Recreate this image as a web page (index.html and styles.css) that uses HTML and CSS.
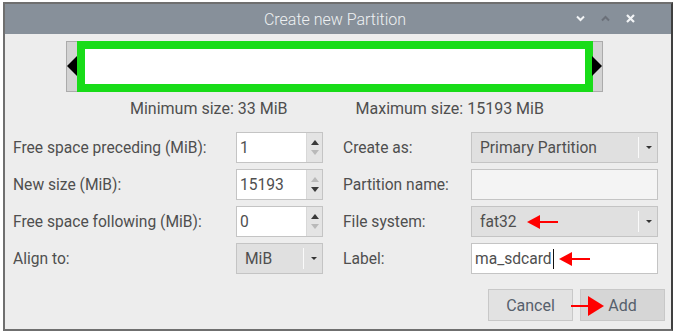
FILE: index.html
```html
<!DOCTYPE html>
<html>
<head>
  <title>Create new Partition</title>
  <link rel="stylesheet" href="styles.css">
</head>
<body>
  <div class="window">
    <div class="titlebar">
      <div class="title">Create new Partition</div>
      <div class="win-buttons">
        <svg class="wb" width="9" height="7" viewBox="0 0 9 7"><path d="M1 1.5 L4.5 5 L8 1.5" fill="none" stroke="#f2f4f6" stroke-width="2"/></svg>
        <svg class="wb" width="9" height="7" viewBox="0 0 9 7"><path d="M1 5.5 L4.5 2 L8 5.5" fill="none" stroke="#6b7079" stroke-width="2"/></svg>
        <svg class="wb" width="9" height="9" viewBox="0 0 9 9"><path d="M1 1 L8 8 M8 1 L1 8" fill="none" stroke="#f2f4f6" stroke-width="2.2"/></svg>
      </div>
    </div>

    <div class="content">
      <div class="slider">
        <span class="handle left"></span>
        <div class="partition-box"></div>
        <span class="handle right"></span>
      </div>

      <div class="limits">
        <span class="min">Minimum size: 33 MiB</span>
        <span class="max">Maximum size: 15193 MiB</span>
      </div>

      <div class="form">
        <label class="lbl">Free space preceding (MiB):</label>
        <div class="spin">
          <div class="entry">1</div>
          <div class="steps">
            <span class="up"></span>
            <span class="down off"></span>
          </div>
        </div>
        <label class="lbl right-lbl">Create as:</label>
        <div class="combo">
          <span class="value">Primary Partition</span>
          <span class="sep"></span>
          <span class="drop"></span>
        </div>

        <label class="lbl">New size (MiB):</label>
        <div class="spin">
          <div class="entry">15193</div>
          <div class="steps">
            <span class="up off"></span>
            <span class="down"></span>
          </div>
        </div>
        <label class="lbl right-lbl">Partition name:</label>
        <div class="text-entry disabled"></div>

        <label class="lbl">Free space following (MiB):</label>
        <div class="spin">
          <div class="entry">0</div>
          <div class="steps">
            <span class="up"></span>
            <span class="down off"></span>
          </div>
        </div>
        <label class="lbl right-lbl">File system:</label>
        <div class="combo">
          <span class="value">fat32</span>
          <svg class="mark" width="32" height="16" viewBox="0 0 32 16"><path d="M12 8 L31 8" stroke="#ff0000" stroke-width="2"/><path d="M0 8 L13 1 L13 15 Z" fill="#ff0000"/></svg>
          <span class="sep"></span>
          <span class="drop"></span>
        </div>

        <label class="lbl">Align to:</label>
        <div class="combo small">
          <span class="value">MiB</span>
          <span class="sep"></span>
          <span class="drop"></span>
        </div>
        <label class="lbl right-lbl">Label:</label>
        <div class="text-entry">
          <span>ma_sdcard</span><span class="cursor"></span>
          <svg class="mark" width="32" height="16" viewBox="0 0 32 16"><path d="M12 8 L31 8" stroke="#ff0000" stroke-width="2"/><path d="M0 8 L13 1 L13 15 Z" fill="#ff0000"/></svg>
        </div>
      </div>

      <div class="actions">
        <button class="btn">Cancel</button>
        <button class="btn default">
          <svg class="btn-mark" width="34" height="22" viewBox="0 0 34 22"><path d="M0 11 L20 11" stroke="#ff0000" stroke-width="2"/><path d="M33 11 L17 1 L17 21 Z" fill="#ff0000"/></svg>
          Add
        </button>
      </div>
    </div>
  </div>
</body>
</html>
```

FILE: styles.css
```css
:root {
  --title-bg: #87909a;
  --body-bg: #ededed;
  --text: #4f4f4f;
  --field-border: #c4c4c4;
}

body {
  margin: 0;
  background: #ffffff;
  font-family: Roboto, "Liberation Sans", sans-serif;
  color: var(--text);
}

.window {
  margin: 2px 0 0 3px;
  width: 666px;
  height: 325px;
  border: 2px solid #6f6f6f;
  border-right-color: #3f3f3f;
  background: var(--body-bg);
  display: flex;
  flex-direction: column;
}

.titlebar {
  height: 30px;
  background: var(--title-bg);
  position: relative;
  display: flex;
  align-items: center;
  justify-content: center;
  flex-shrink: 0;
}

.title {
  color: #eef0f2;
  font-size: 16px;
  font-weight: 300;
  margin-right: 6px;
}

.win-buttons {
  position: absolute;
  right: 36px;
  top: 10px;
  display: flex;
  align-items: center;
  gap: 16px;
}

.content {
  flex: 1;
  padding: 7px 0 0 8px;
}

/* partition bar */
.slider {
  margin-left: 53px;
  width: 535px;
  height: 49px;
  background: #d3d3d3;
  border: 1px solid #ababab;
  display: flex;
  position: relative;
}

.partition-box {
  margin: -1px 0 -1px 10px;
  width: 500px;
  border: 8px solid #18dc18;
  background: #ffffff;
}

.handle {
  position: absolute;
  top: 14px;
  width: 0;
  height: 0;
  border-top: 10px solid transparent;
  border-bottom: 10px solid transparent;
}

.handle.left {
  left: 0;
  border-right: 10px solid #000;
}

.handle.right {
  right: 0;
  border-left: 10px solid #000;
}

.limits {
  display: flex;
  font-size: 16px;
  margin-top: 6px;
  height: 20px;
  align-items: center;
}

.limits .min {
  margin-left: 117px;
}

.limits .max {
  margin-left: 68px;
}

/* form grid */
.form {
  margin-top: 14px;
  display: grid;
  grid-template-columns: 223px 87px 148px 187px;
  row-gap: 6px;
  grid-auto-rows: 31px;
  font-size: 15.6px;
}

.lbl {
  display: flex;
  align-items: center;
}

.right-lbl {
  margin-left: 20px;
}

.spin {
  display: flex;
  border: 1px solid var(--field-border);
  background: #e4e4e4;
}

.entry {
  width: 70px;
  background: #ffffff;
  border-right: 1px solid #d8d8d8;
  display: flex;
  align-items: center;
  padding-left: 3px;
  box-sizing: border-box;
}

.steps {
  flex: 1;
  display: flex;
  flex-direction: column;
  align-items: center;
  justify-content: space-around;
  padding: 4px 0;
}

.steps span {
  width: 0;
  height: 0;
  border-left: 4px solid transparent;
  border-right: 4px solid transparent;
}

.steps .up {
  border-bottom: 5px solid #3a3a3a;
}

.steps .down {
  border-top: 5px solid #3a3a3a;
}

.steps .up.off {
  border-bottom-color: #b9b9b9;
}

.steps .down.off {
  border-top-color: #b9b9b9;
}

.combo {
  display: flex;
  align-items: center;
  border: 1px solid var(--field-border);
  background: #e0e0e0;
  position: relative;
}

.combo .value {
  flex: 1;
  padding-left: 8px;
}

.combo .sep {
  width: 1px;
  height: 21px;
  background: #fafafa;
}

.combo .drop {
  width: 0;
  height: 0;
  margin: 0 5px 0 7px;
  border-left: 3px solid transparent;
  border-right: 3px solid transparent;
  border-top: 3px solid #333;
}

.text-entry {
  display: flex;
  align-items: center;
  border: 1px solid var(--field-border);
  background: #ffffff;
  padding-left: 3px;
  position: relative;
}

.text-entry.disabled {
  background: #f4f4f4;
}

.cursor {
  width: 1px;
  height: 20px;
  background: #111;
  margin-left: 1px;
}

.mark {
  position: absolute;
  top: 7px;
}

.combo .mark {
  left: 55px;
}

.text-entry .mark {
  left: 87px;
}

/* buttons */
.actions {
  margin-top: 15px;
  display: flex;
  justify-content: flex-end;
  gap: 7px;
  padding-right: 6px;
}

.btn {
  width: 85px;
  height: 32px;
  border: 1px solid #c8c8c8;
  background: #e2e2e2;
  color: #56606c;
  font-family: Roboto, "Liberation Sans", sans-serif;
  font-size: 16px;
  position: relative;
  padding: 0;
}

.btn.default {
  background: #d6d6d6;
}

.btn-mark {
  position: absolute;
  left: -10px;
  top: 5px;
}
```
